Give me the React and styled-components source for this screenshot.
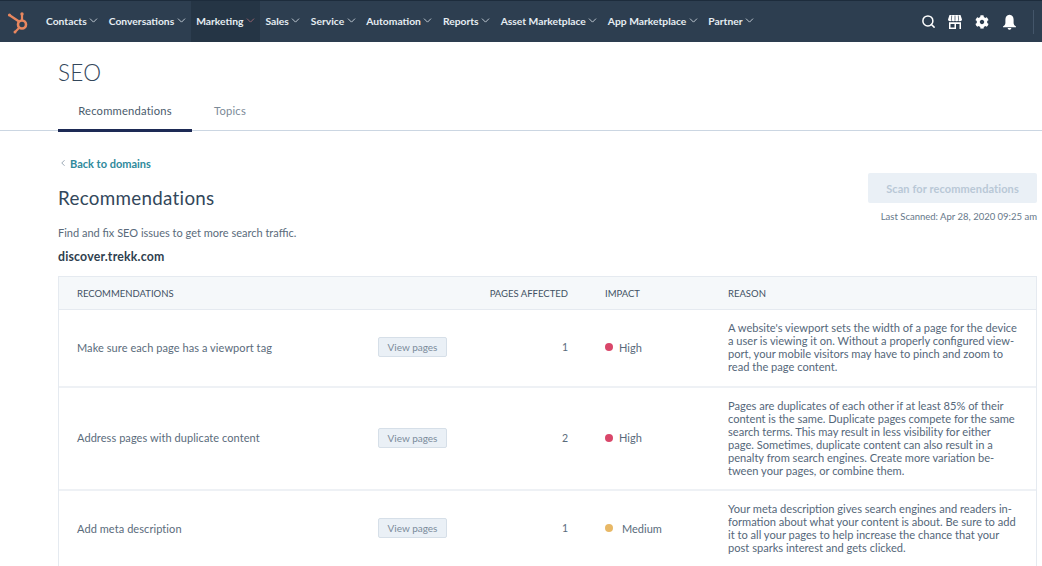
import React from 'react'
import styled, { createGlobalStyle } from 'styled-components'
import { Search, ChevronDown, ChevronLeft } from 'lucide-react'
import { FaCog } from 'react-icons/fa'

const GlobalStyle = createGlobalStyle`
   html, body {
      margin: 0;
      padding: 0;
      height: 566px;
      overflow: hidden;
      background: #fff;
      font-family: Lato, "Open Sans", sans-serif;
   }
`

// --- Nav ---

const NavBar = styled.nav`
   height: 42px;
   box-sizing: border-box;
   display: flex;
   align-items: stretch;
   background: #2d3e50;
   border-top: 1px solid #1d2c3c;
   padding-left: 6px;
`

const Logo = styled.div`
   width: 28px;
   display: flex;
   align-items: center;
   margin-right: 6.5px;
`

const NavItem = styled.div`
   display: flex;
   align-items: center;
   gap: 3px;
   padding: 0 5.5px 2px;
   color: #e6edf3;
   font-size: 10.3px;
   font-weight: 700;
   white-space: nowrap;
   background: ${(p) => (p.$active ? '#253545' : 'transparent')};
   svg {
      margin: 0 -2.5px;
      opacity: 0.85;
   }
`

const NavIcons = styled.div`
   margin-left: auto;
   display: flex;
   align-items: center;
   gap: 11px;
   padding-right: 8px;
`

const IconSlot = styled.div`
   width: 16px;
   height: 16px;
   display: flex;
   align-items: center;
   justify-content: center;
   color: #fff;
`

const NavDivider = styled.div`
   width: 1px;
   height: 24px;
   background: #44566a;
   margin-left: 5px;
`

// --- Page header ---

const Title = styled.h1`
   margin: 0;
   padding: 19px 0 0 58px;
   height: 33px;
   font-size: 22.5px;
   line-height: 24px;
   font-weight: 300;
   color: #33475b;
   letter-spacing: 0.3px;
`

const Tabs = styled.div`
   display: flex;
   height: 36px;
   padding-left: 58px;
   border-bottom: 1px solid #cbd6e2;
`

const Tab = styled.div`
   width: ${(p) => p.$width}px;
   box-sizing: border-box;
   height: 38px;
   padding-top: 10px;
   text-align: center;
   font-size: 11.2px;
   line-height: 14px;
   letter-spacing: 0.2px;
   color: ${(p) => (p.$active ? '#4a5b6c' : '#7c8a98')};
   border-bottom: 3px solid ${(p) => (p.$active ? '#1d2a55' : 'transparent')};
`

// --- Content ---

const Content = styled.main`
   padding: 25px 5px 0 58px;
`

const BackLink = styled.div`
   display: flex;
   align-items: center;
   gap: 2px;
   height: 14px;
   font-size: 11px;
   font-weight: 700;
   color: #2f8a9c;
   svg {
      color: #5e7488;
   }
`

const HeadRow = styled.div`
   display: flex;
   justify-content: space-between;
   align-items: flex-start;
`

const HeadLeft = styled.div`
   padding-top: 16px;
`

const PageHeading = styled.h2`
   margin: 0;
   font-size: 18.8px;
   line-height: 24px;
   font-weight: 400;
   color: #33475b;
   letter-spacing: 0.3px;
`

const Intro = styled.p`
   margin: 16px 0 0;
   font-size: 11px;
   line-height: 14px;
   color: #5a6b7b;
`

const Domain = styled.div`
   margin-top: 9px;
   font-size: 12.3px;
   line-height: 16px;
   font-weight: 700;
   letter-spacing: 0.2px;
   color: #2f3f4f;
`

const ScanBlock = styled.div`
   display: flex;
   flex-direction: column;
   align-items: flex-end;
   margin-top: 3px;
`

const ScanButton = styled.div`
   width: 169px;
   height: 30px;
   display: flex;
   align-items: center;
   justify-content: center;
   background: #eaf0f6;
   border-radius: 2px;
   font-size: 11px;
   font-weight: 700;
   letter-spacing: 0.1px;
   color: #b9c8d6;
`

const LastScanned = styled.div`
   margin-top: 8px;
   font-size: 9.5px;
   line-height: 12px;
   color: #66788a;
`

const Table = styled.div`
   margin-top: 11px;
   border: 1px solid #e5eaf0;
   border-bottom: none;
`

const columns = '319px 71px 119px 37px 123px 1fr'

const HeaderRow = styled.div`
   display: grid;
   grid-template-columns: ${columns};
   height: 33px;
   align-items: center;
   box-sizing: border-box;
   background: #f5f8fa;
   border-bottom: 1px solid #e5eaf0;
   font-size: 9.5px;
   color: #3f5163;
`

const Row = styled.div`
   display: grid;
   grid-template-columns: ${columns};
   height: ${(p) => p.$height}px;
   box-sizing: border-box;
   align-items: center;
   padding-bottom: 2px;
   border-bottom: 2px solid #eef1f5;
   font-size: 11px;
   color: #5a6b7b;
   &:last-child {
      padding-bottom: 8px;
   }
`

const NameCell = styled.div`
   padding-left: 18px;
   letter-spacing: 0.07px;
`

const HeadName = styled(NameCell)`
   letter-spacing: 0;
`

const ViewButton = styled.div`
   width: 69px;
   height: 20px;
   box-sizing: border-box;
   display: flex;
   align-items: center;
   justify-content: center;
   background: #eaf0f6;
   border: 1px solid #d6dfe8;
   border-radius: 2px;
   font-size: 10px;
   color: #7a8b9b;
`

const CountCell = styled.div`
   text-align: right;
   font-size: 10.5px;
`

const HeadCount = styled.div`
   grid-column: 3;
   text-align: right;
   white-space: nowrap;
`

const ImpactCell = styled.div`
   grid-column: 5;
   display: flex;
   align-items: center;
   gap: ${(p) => p.$gap}px;
   font-size: 11px;
`

const Dot = styled.span`
   width: 8px;
   height: 8px;
   border-radius: 50%;
   background: ${(p) => p.$color};
`

const HeadImpact = styled.div`
   grid-column: 5;
`

const ReasonCell = styled.div`
   font-size: 11.1px;
   line-height: 13px;
   color: #55677a;
   white-space: pre-line;
`

const SprocketLogo = () => (
   <svg width="24" height="24" viewBox="0 0 24 24" fill="none" stroke="#e8875f">
      <circle cx="16" cy="14.5" r="4" strokeWidth="2.6" />
      <path d="M4 5.5 L13 11.5" strokeWidth="2.2" />
      <path d="M16 4.5 V10" strokeWidth="2.2" />
      <path d="M13 18 L9.5 21.5" strokeWidth="2.2" />
      <circle cx="3.5" cy="5" r="1.6" fill="#e8875f" stroke="none" />
      <circle cx="16" cy="4" r="1.7" fill="#e8875f" stroke="none" />
      <circle cx="9" cy="22" r="1.5" fill="#e8875f" stroke="none" />
   </svg>
)

const StoreIcon = () => (
   <svg width="16" height="16" viewBox="0 0 16 16" fill="#fff">
      <path d="M2.5 1 H13.5 L15 5.5 Q15 7.2 13 7.2 Q11.5 7.2 11.3 6 Q11 7.2 9.6 7.2 Q8.2 7.2 8 6 Q7.8 7.2 6.4 7.2 Q5 7.2 4.7 6 Q4.5 7.2 3 7.2 Q1 7.2 1 5.5 Z" />
      <path d="M2 8.2 H14 V15 H2 Z M3.5 10 V13.5 H7.5 V10 Z M9 10 V15 H12.5 V10 Z" fillRule="evenodd" />
      <path d="M4.7 1.5 L4.4 6 M8 1.5 V6 M11.3 1.5 L11.6 6" stroke="#2d3e50" strokeWidth="0.7" fill="none" />
   </svg>
)

const BellIcon = () => (
   <svg width="15" height="16" viewBox="0 0 15 16" fill="#fff">
      <path d="M7.5 0.8 C4.7 0.8 3.4 3 3.4 5.5 V9 C3.4 10.5 2.5 11.5 1 12.5 V13.3 H14 V12.5 C12.5 11.5 11.6 10.5 11.6 9 V5.5 C11.6 3 10.3 0.8 7.5 0.8 Z" />
      <path d="M5.6 14 H9.4 C9.2 15.2 8.4 15.8 7.5 15.8 C6.6 15.8 5.8 15.2 5.6 14 Z" />
   </svg>
)

const navItems = ['Contacts', 'Conversations', 'Marketing', 'Sales', 'Service', 'Automation', 'Reports', 'Asset Marketplace', 'App Marketplace', 'Partner']

const rows = [
   {
      name: 'Make sure each page has a viewport tag',
      count: 1,
      impact: 'High',
      color: '#d9476a',
      gap: 6,
      height: 78,
      reason: "A website's viewport sets the width of a page for the device\na user is viewing it on. Without a properly configured view-\nport, your mobile visitors may have to pinch and zoom to\nread the page content.",
   },
   {
      name: 'Address pages with duplicate content',
      count: 2,
      impact: 'High',
      color: '#d9476a',
      gap: 6,
      height: 103,
      reason: 'Pages are duplicates of each other if at least 85% of their\ncontent is the same. Duplicate pages compete for the same\nsearch terms. This may result in less visibility for either\npage. Sometimes, duplicate content can also result in a\npenalty from search engines. Create more variation be-\ntween your pages, or combine them.',
   },
   {
      name: 'Add meta description',
      count: 1,
      impact: 'Medium',
      color: '#e8b866',
      gap: 9,
      height: 84,
      reason: 'Your meta description gives search engines and readers in-\nformation about what your content is about. Be sure to add\nit to all your pages to help increase the chance that your\npost sparks interest and gets clicked.',
   },
]

function App() {
   return (
      <>
         <GlobalStyle />
         <NavBar>
            <Logo>
               <SprocketLogo />
            </Logo>
            {navItems.map((item) => (
               <NavItem key={item} $active={item === 'Marketing'}>
                  {item}
                  <ChevronDown size={13} strokeWidth={1.7} color={item === 'Marketing' ? '#b5707a' : '#e6edf3'} />
               </NavItem>
            ))}
            <NavIcons>
               <IconSlot>
                  <Search size={15} strokeWidth={2.4} />
               </IconSlot>
               <IconSlot>
                  <StoreIcon />
               </IconSlot>
               <IconSlot>
                  <FaCog size={14} />
               </IconSlot>
               <IconSlot>
                  <BellIcon />
               </IconSlot>
               <NavDivider />
            </NavIcons>
         </NavBar>

         <Title>SEO</Title>
         <Tabs>
            <Tab $width={134} $active>
               Recommendations
            </Tab>
            <Tab $width={76}>Topics</Tab>
         </Tabs>

         <Content>
            <BackLink>
               <ChevronLeft size={10} strokeWidth={1.5} />
               <span>Back to domains</span>
            </BackLink>
            <HeadRow>
               <HeadLeft>
                  <PageHeading>Recommendations</PageHeading>
                  <Intro>Find and fix SEO issues to get more search traffic.</Intro>
                  <Domain>discover.trekk.com</Domain>
               </HeadLeft>
               <ScanBlock>
                  <ScanButton>Scan for recommendations</ScanButton>
                  <LastScanned>Last Scanned: Apr 28, 2020 09:25 am</LastScanned>
               </ScanBlock>
            </HeadRow>

            <Table>
               <HeaderRow>
                  <HeadName>RECOMMENDATIONS</HeadName>
                  <HeadCount>PAGES AFFECTED</HeadCount>
                  <HeadImpact>IMPACT</HeadImpact>
                  <div>REASON</div>
               </HeaderRow>
               {rows.map((row) => (
                  <Row key={row.name} $height={row.height}>
                     <NameCell>{row.name}</NameCell>
                     <ViewButton>View pages</ViewButton>
                     <CountCell>{row.count}</CountCell>
                     <ImpactCell $gap={row.gap}>
                        <Dot $color={row.color} />
                        {row.impact}
                     </ImpactCell>
                     <ReasonCell>{row.reason}</ReasonCell>
                  </Row>
               ))}
            </Table>
         </Content>
      </>
   )
}

export default App
